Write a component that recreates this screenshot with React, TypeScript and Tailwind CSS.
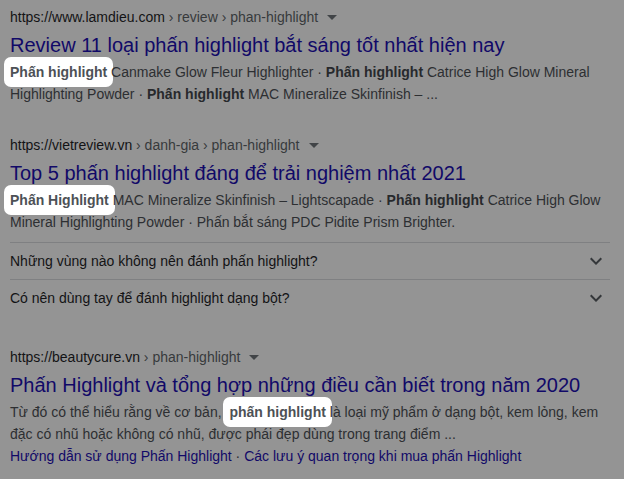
import type { ReactNode } from "react";

function Mark({ children, className = "-mx-[6px]" }: { children: ReactNode; className?: string }) {
    return (
        <span className={`rounded-[7px] bg-white px-[6px] py-[7px] font-bold text-[#4d5156] ${className}`}>
            {children}
        </span>
    );
}

function B({ children }: { children: ReactNode }) {
    return <b className="font-bold text-[#27292c]">{children}</b>;
}

function Url({ site, path }: { site: string; path: string }) {
    return (
        <div className="flex h-5 items-center text-sm leading-5">
            <span className="text-[#131315]">{site}</span>
            <span className="whitespace-pre text-[#373a3c]">{path}</span>
            <svg width="10" height="5" viewBox="0 0 10 5" className="ml-[9px]">
                <path d="M0 0h10L5 5z" fill="#414447" />
            </svg>
        </div>
    );
}

function Title({ children }: { children: ReactNode }) {
    return <h3 className="mt-1 text-[20px] leading-[28px] text-[#110968]">{children}</h3>;
}

function Snippet({ children }: { children: ReactNode }) {
    return <div className="mt-[2px] text-sm leading-[22px] text-[#2d2f32]">{children}</div>;
}

function Faq({ q }: { q: string }) {
    return (
        <div className="flex h-[37px] items-center justify-between border-t border-[#7f8082] text-sm text-[#131315]">
            <span>{q}</span>
            <svg width="24" height="24" viewBox="0 0 24 24" className="mr-[2px]">
                <path d="M16.59 8.59 12 13.17 7.41 8.59 6 10l6 6 6-6z" fill="#34373a" />
            </svg>
        </div>
    );
}

export default function App() {
    return (
        <div className="h-[479px] w-[624px] overflow-hidden bg-[#949494] pl-[10px] pt-[7px] font-['Liberation_Sans',Arial,sans-serif]">
            <div className="w-[600px]">
                {/* Result 1 */}
                <div>
                    <Url site="https://www.lamdieu.com" path=" › review › phan-highlight" />
                    <Title>Review 11 loại phấn highlight bắt sáng tốt nhất hiện nay</Title>
                    <Snippet>
                        <Mark>Phấn highlight</Mark> Canmake Glow Fleur Highlighter · <B>Phấn highlight</B> Catrice High Glow Mineral
                        Highlighting Powder · <B>Phấn highlight</B> MAC Mineralize Skinfinish – ...
                    </Snippet>
                </div>

                {/* Result 2 */}
                <div className="mt-[30px]">
                    <Url site="https://vietreview.vn" path=" › danh-gia › phan-highlight" />
                    <Title>Top 5 phấn highlight đáng để trải nghiệm nhất 2021</Title>
                    <Snippet>
                        <Mark>Phấn Highlight</Mark> MAC Mineralize Skinfinish – Lightscapade · <B>Phấn highlight</B> Catrice High Glow
                        Mineral Highlighting Powder · Phấn bắt sáng PDC Pidite Prism Brighter.
                    </Snippet>
                    <div className="mt-[9px]">
                        <Faq q="Những vùng nào không nên đánh phấn highlight?" />
                        <Faq q="Có nên dùng tay để đánh highlight dạng bột?" />
                    </div>
                </div>

                {/* Result 3 */}
                <div className="mt-[31px]">
                    <Url site="https://beautycure.vn" path=" › phan-highlight" />
                    <Title>Phấn Highlight và tổng hợp những điều cần biết trong năm 2020</Title>
                    <Snippet>
                        Từ đó có thể hiểu rằng về cơ bản, <Mark className="-ml-[2px] -mr-[6px]">phấn highlight</Mark> là loại mỹ phẩm ở dạng bột, kem lỏng, kem
                        đặc có nhũ hoặc không có nhũ, được phái đẹp dùng trong trang điểm ...
                    </Snippet>
                    <div className="text-sm leading-[22px]">
                        <span className="text-[#110968]">Hướng dẫn sử dụng Phấn Highlight</span>
                        <span className="text-[#2d2f32]"> · </span>
                        <span className="text-[#110968]">Các lưu ý quan trọng khi mua phấn Highlight</span>
                    </div>
                </div>
            </div>
        </div>
    );
}
